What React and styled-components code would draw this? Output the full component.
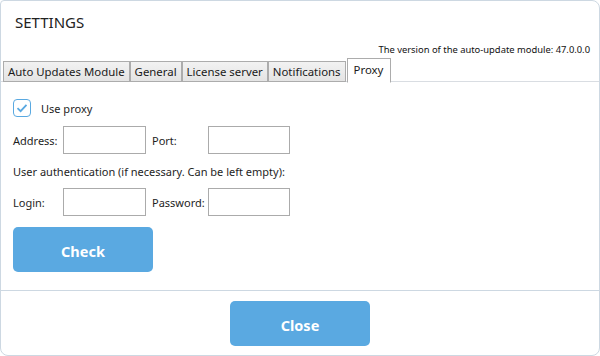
import React from 'react';
import styled, { createGlobalStyle, css } from 'styled-components';

const GlobalStyle = createGlobalStyle`
  html, body {
    margin: 0;
    padding: 0;
    background: #ffffff;
  }

  body {
    font-family: 'Segoe UI', 'Noto Sans', sans-serif;
    color: #1e1e1e;
  }
`;

const Dialog = styled.div`
  box-sizing: border-box;
  width: 600px;
  height: 356px;
  border: 1px solid #cdd8e2;
  border-radius: 4px 8px 8px 8px;
  display: flex;
  flex-direction: column;
  background: #ffffff;
  overflow: hidden;
`;

const Title = styled.h1`
  margin: 0;
  padding: 12px 14px 0;
  height: 30px;
  box-sizing: border-box;
  font-size: 15px;
  font-weight: 400;
  line-height: 18px;
  color: #222222;
`;

const Version = styled.div`
  padding: 12px 9px 0 0;
  text-align: right;
  font-size: 9.4px;
  line-height: 14px;
  color: #111111;
`;

const TabStrip = styled.ul`
  list-style: none;
  margin: 0;
  padding: 0 0 0 2px;
  height: 24px;
  display: flex;
  align-items: flex-end;
  border-bottom: 1px solid #d9dde2;
`;

const Tab = styled.li`
  box-sizing: border-box;
  height: 21px;
  margin-bottom: -1px;
  padding: 0 4px;
  border: 1px solid #acacac;
  background: linear-gradient(#f2f2f2, #e4e4e4);
  font-size: 11.4px;
  line-height: 19px;
  color: #1a1a1a;
  white-space: nowrap;

  ${({ isActive }) =>
    isActive && css`
      height: 25px;
      margin-bottom: -2px;
      margin-left: 1px;
      padding: 1px 7px 0 6px;
      border-bottom-color: #ffffff;
      background: #ffffff;
      line-height: 19px;
      position: relative;
      z-index: 1;
    `}
`;

const Panel = styled.div`
  padding: 17px 12px 0;
  display: flex;
  flex-direction: column;
  font-size: 11px;
  flex: 1;
`;

const CheckRow = styled.label`
  display: flex;
  align-items: center;
  gap: 10px;
  height: 18px;
  color: #1e1e1e;
`;

const Checkbox = styled.span`
  box-sizing: border-box;
  width: 18px;
  height: 18px;
  border: 1px solid #5aa9e1;
  border-radius: 4px;
  display: flex;
  align-items: center;
  justify-content: center;
`;

const FieldRow = styled.div`
  display: grid;
  grid-template-columns: 50px 83px 62px 82px;
  align-items: center;
  margin-top: ${({ top }) => top}px;
`;

const Label = styled.span`
  font-size: 11px;
  color: #1e1e1e;
  padding-left: ${({ indent }) => indent || 0}px;
`;

const Input = styled.input`
  box-sizing: border-box;
  height: 28px;
  width: 100%;
  margin: 0;
  border: 1px solid #ababab;
  background: #ffffff;
  outline: none;
`;

const Note = styled.div`
  margin-top: 10px;
  height: 16px;
  line-height: 16px;
  font-size: 11px;
  color: #1e1e1e;
`;

const Button = styled.button`
  box-sizing: border-box;
  width: 140px;
  height: 45px;
  border: 0;
  border-radius: 5px;
  background: #5aa9e1;
  color: #ffffff;
  font-family: 'Segoe UI', 'Noto Sans', sans-serif;
  font-size: 14.5px;
  font-weight: 700;
  cursor: pointer;
  padding: 3px 0 0;
`;

const CheckButton = styled(Button)`
  margin-top: 11px;
`;

const Footer = styled.div`
  height: 65px;
  border-top: 1px solid #cdd8e2;
  display: flex;
  justify-content: center;
  padding-top: 10px;
  box-sizing: border-box;
`;

const App = () => (
  <>
    <GlobalStyle />
    <Dialog>
      <Title>SETTINGS</Title>
      <Version>The version of the auto-update module: 47.0.0.0</Version>
      <TabStrip role="tablist">
        <Tab>Auto Updates Module</Tab>
        <Tab>General</Tab>
        <Tab>License server</Tab>
        <Tab>Notifications</Tab>
        <Tab isActive>Proxy</Tab>
      </TabStrip>
      <Panel>
        <CheckRow>
          <Checkbox>
            <svg width="12" height="10" viewBox="0 0 12 10">
              <path d="M1.5 5.2 L4.6 8.2 L10.5 1.8" fill="none" stroke="#5aa9e1" strokeWidth="1.8" />
            </svg>
          </Checkbox>
          Use proxy
        </CheckRow>
        <FieldRow top={9}>
          <Label>Address:</Label>
          <Input />
          <Label indent={6}>Port:</Label>
          <Input />
        </FieldRow>
        <Note>User authentication (if necessary. Can be left empty):</Note>
        <FieldRow top={8}>
          <Label>Login:</Label>
          <Input />
          <Label indent={6}>Password:</Label>
          <Input />
        </FieldRow>
        <CheckButton>Check</CheckButton>
      </Panel>
      <Footer>
        <Button>Close</Button>
      </Footer>
    </Dialog>
  </>
);

export default App;
